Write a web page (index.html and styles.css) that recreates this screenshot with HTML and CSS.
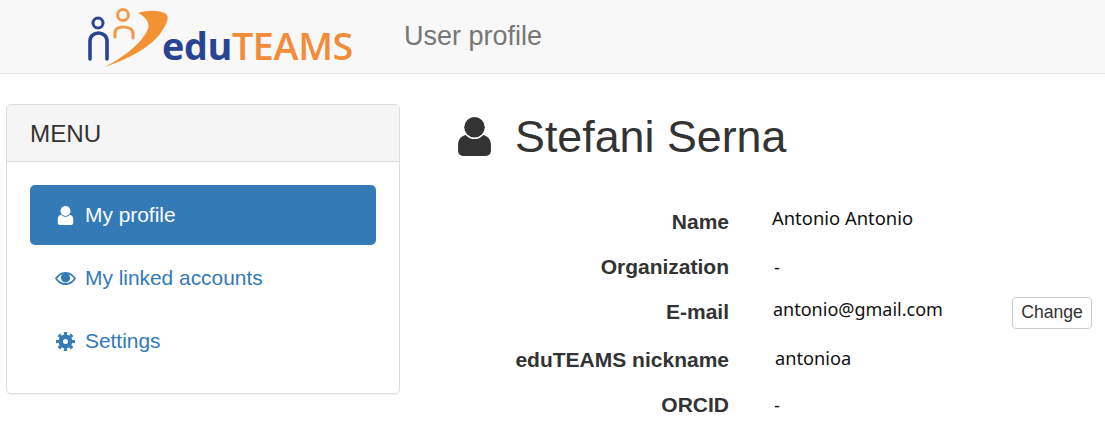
FILE: index.html
```html
<!DOCTYPE html>
<html lang="en">
<head>
<meta charset="utf-8">
<title>User profile</title>
<link rel="stylesheet" href="styles.css">
</head>
<body>
<header class="navbar">
  <div class="logo">
    <svg class="logo-mark" viewBox="0 0 82 68" width="82" height="68" aria-hidden="true">
      <path d="M52 12 C62 9 74 9 80 13 C84 16 80 24 76 30 C66 46 42 58 19 66 C38 56 56 42 62 28 C64 22 60 16 52 12 Z" fill="#f29233"/>
      <circle cx="12" cy="22" r="5" fill="none" stroke="#2a4494" stroke-width="3"/>
      <path d="M4 58 V40 C4 35 8 32 12.500 32 C17 32 21 35 21 40 V58" fill="none" stroke="#2a4494" stroke-width="3.600" stroke-linecap="round"/>
      <circle cx="37" cy="14" r="5.400" fill="none" stroke="#f29b4f" stroke-width="3"/>
      <path d="M29 36 V32 C29 28 32 26 37 26 C42 26 47 28 47 33 V37" fill="none" stroke="#f29b4f" stroke-width="3.200" stroke-linecap="round"/>
    </svg>
    <span class="logo-text"><span class="logo-edu">edu</span><span class="logo-teams">TEAMS</span></span>
  </div>
  <div class="brand-title">User profile</div>
</header>
<main class="page">
  <aside class="panel">
    <div class="panel-heading">MENU</div>
    <nav class="pills">
      <a class="pill pill-active" href="#">
        <svg class="pill-icon" viewBox="0 0 32 38" aria-hidden="true"><use href="#person"/></svg>
        My profile
      </a>
      <a class="pill" href="#">
        <svg class="pill-icon" viewBox="0 0 32 24" aria-hidden="true">
          <path fill="currentColor" fill-rule="evenodd" d="M16 2C9 2 3.500 6.500 0 12c3.500 5.500 9 10 16 10s12.500-4.500 16-10C28.500 6.500 23 2 16 2zM3 12c3-4 7-7 13-7s10 3 13 7c-3 4-7 7-13 7S6 16 3 12z"/>
          <circle cx="16" cy="11" r="7" fill="currentColor"/>
        </svg>
        My linked accounts
      </a>
      <a class="pill" href="#">
        <svg class="pill-icon" viewBox="0 0 32 32" aria-hidden="true">
          <circle cx="16" cy="16" r="8" fill="none" stroke="currentColor" stroke-width="7.500"/>
          <circle cx="16" cy="16" r="13.500" fill="none" stroke="currentColor" stroke-width="5" pathLength="80" stroke-dasharray="5 5" stroke-dashoffset="2.500"/>
        </svg>
        Settings
      </a>
    </nav>
  </aside>
  <section class="content">
    <h1 class="name">
      <svg class="name-icon" viewBox="0 0 32 38" aria-hidden="true"><use href="#person"/></svg>
      Stefani Serna
    </h1>
    <div class="details">
      <div class="row"><div class="label">Name</div><div class="value value-name">Antonio Antonio</div></div>
      <div class="row"><div class="label">Organization</div><div class="value value-plain">-</div></div>
      <div class="row row-email"><div class="label">E-mail</div><div class="value value-email">antonio@gmail.com</div><button class="btn" type="button">Change</button></div>
      <div class="row"><div class="label">eduTEAMS nickname</div><div class="value value-nick">antonioa</div></div>
      <div class="row"><div class="label">ORCID</div><div class="value value-plain">-</div></div>
    </div>
  </section>
</main>
<svg class="defs" width="0" height="0" aria-hidden="true">
  <defs>
    <symbol id="person" viewBox="0 0 32 38">
      <circle cx="16" cy="10" r="10" fill="currentColor"/>
      <path fill="currentColor" d="M7.500 17.500C10 20.500 13 21.500 16 21.500s6-1 8.500-4C29 18.500 32 22 32 27v6c0 3-2 5-5 5H5c-3 0-5-2-5-5v-6c0-5 3-8.500 7.500-9.500z"/>
    </symbol>
  </defs>
</svg>
</body>
</html>
```
FILE: styles.css
```css
* { box-sizing: border-box; }
html, body { margin: 0; padding: 0; }
body {
  width: 1105px;
  height: 439px;
  overflow: hidden;
  background: #fff;
  color: #333;
  font-family: "Liberation Sans", Arial, sans-serif;
}
.navbar {
  height: 74px;
  background: #f8f8f8;
  border-bottom: 1px solid #e7e7e7;
  display: flex;
  align-items: flex-start;
  padding-left: 86px;
}
.logo { display: flex; align-items: flex-start; width: 318px; padding-top: 1px; }
.logo-mark { display: block; flex: none; }
.logo-text {
  font-family: "Open Sans", sans-serif;
  font-weight: 600;
  font-size: 37.8px;
  line-height: 50px;
  margin-left: -6px;
  margin-top: 20px;
  letter-spacing: -0.4px;
  white-space: nowrap;
}
.logo-edu { color: #2a4494; font-weight: 700; }
.logo-teams { color: #f28c38; }
.brand-title { font-size: 27px; line-height: 30px; margin-top: 20.5px; color: #777; }
.page { display: flex; align-items: flex-start; padding: 30px 0 0 6px; }
.panel {
  width: 394px;
  height: 290px;
  flex: none;
  border: 1px solid #ddd;
  border-radius: 5px;
  box-shadow: 0 1px 1px rgba(0,0,0,.05);
  background: #fff;
}
.panel-heading {
  height: 57px;
  padding: 0 23px;
  background: #f5f5f5;
  border-bottom: 1px solid #ddd;
  border-radius: 4px 4px 0 0;
  font-size: 24.2px;
  line-height: 58px;
}
.pills { display: flex; flex-direction: column; gap: 3px; padding: 23px 23px 0; }
.pill {
  height: 60px;
  display: flex;
  align-items: center;
  padding-left: 25px;
  gap: 9px;
  border-radius: 5px;
  color: #337ab7;
  font-size: 20.9px;
  text-decoration: none;
}
.pill-active { background: #337ab7; color: #fff; }
.pill-icon { width: 21px; height: 19px; flex: none; }
.content { width: 699px; flex: none; }
.name {
  margin: 0;
  padding: 4px 0 0 58px;
  display: flex;
  align-items: center;
  gap: 24px;
  font-weight: 400;
  font-size: 44.8px;
  line-height: 56px;
}
.name-icon { width: 33px; height: 39px; flex: none; color: #333; }
.details { padding-top: 35px; }
.row { display: flex; height: 45px; align-items: center; }
.row-email { margin-bottom: 3px; }
.label { width: 329px; text-align: right; font-weight: 700; font-size: 21px; flex: none; }
.value {
  font-family: "Noto Sans", sans-serif;
  font-size: 18.2px;
  color: #111;
  flex: none;
}
.value-plain { margin-left: 45px; }
.value-name { margin-left: 43px; margin-top: -8px; font-size: 18.4px; }
.value-email { margin-left: 44px; margin-top: -6px; width: 239px; font-size: 18px; }
.value-nick { margin-left: 46px; margin-top: -4px; }
.btn {
  width: 80px;
  height: 32px;
  margin-top: 2px;
  padding: 0;
  border: 1px solid #ccc;
  border-radius: 4px;
  background: #fff;
  color: #333;
  font-family: "Liberation Sans", Arial, sans-serif;
  font-size: 17.6px;
}
.defs { position: absolute; }
```
